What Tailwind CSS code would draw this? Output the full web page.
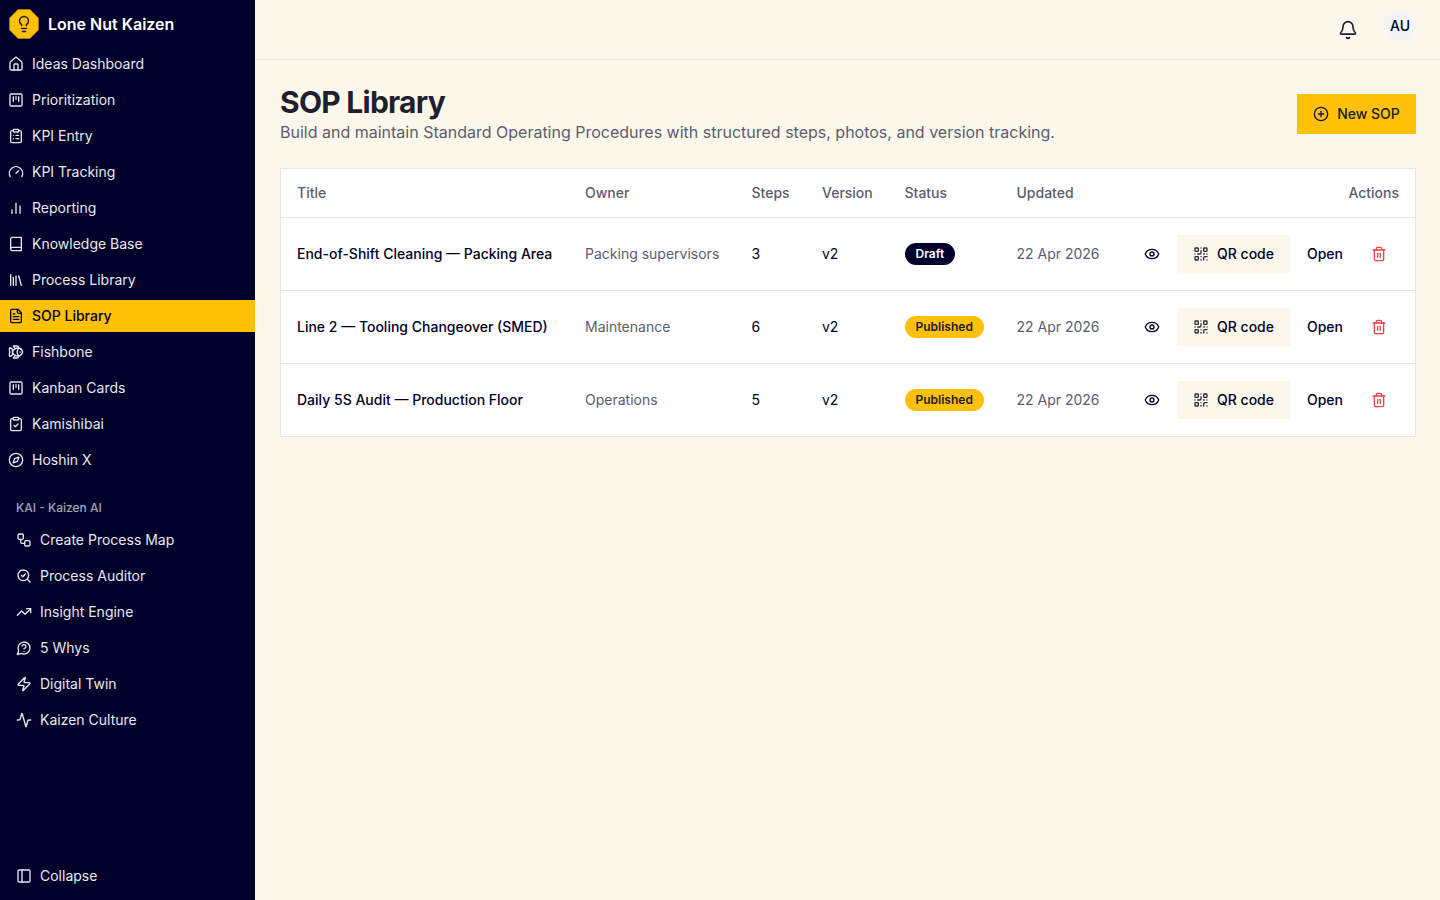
<!DOCTYPE html>
<html lang="en">

<head>
    <meta charset="UTF-8">
    <meta name="viewport" content="width=device-width, initial-scale=1.0">
    <title>SOP Library</title>
    <script src="https://cdn.jsdelivr.net/npm/@tailwindcss/browser@4"></script>
</head>

<body class="bg-[#fcf7eb] text-[#00002a] font-['Inter',sans-serif] h-screen overflow-hidden flex">
    <!-- Sidebar -->
    <aside class="w-[255px] h-screen shrink-0 bg-[#00002a] text-[#e8e8ee] flex flex-col text-sm">
        <div class="h-12 flex items-center gap-[9px] pl-[9px]">
            <svg class="w-[30px] h-[30px]" viewBox="0 0 30 30">
                <polygon points="9,0.5 21,0.5 29.5,9 29.5,21 21,29.5 9,29.5 0.5,21 0.5,9" fill="#ffc107" stroke="#a8702a" stroke-width="0.8"></polygon>
                <g transform="translate(6 6) scale(0.75)" fill="none" stroke="#2a1d20" stroke-width="2" stroke-linecap="round" stroke-linejoin="round">
                    <path d="M15 14c.2-1 .7-1.7 1.5-2.5 1-.9 1.5-2.2 1.5-3.5A6 6 0 0 0 6 8c0 1 .2 2.2 1.5 3.5.7.7 1.3 1.5 1.5 2.5"></path>
                    <path d="M9 18h6"></path>
                    <path d="M10 22h4"></path>
                </g>
            </svg>
            <span class="text-base font-semibold text-white">Lone Nut Kaizen</span>
        </div>

        <nav class="flex flex-col gap-1">
            <a class="h-8 flex items-center gap-2 pl-2">
                <svg class="w-4 h-4" viewBox="0 0 24 24" fill="none" stroke="currentColor" stroke-width="2" stroke-linecap="round" stroke-linejoin="round"><path d="M15 21v-8a1 1 0 0 0-1-1h-4a1 1 0 0 0-1 1v8"></path><path d="M3 10a2 2 0 0 1 .709-1.528l7-5.999a2 2 0 0 1 2.582 0l7 5.999A2 2 0 0 1 21 10v9a2 2 0 0 1-2 2H5a2 2 0 0 1-2-2z"></path></svg>
                <span>Ideas Dashboard</span>
            </a>
            <a class="h-8 flex items-center gap-2 pl-2">
                <svg class="w-4 h-4" viewBox="0 0 24 24" fill="none" stroke="currentColor" stroke-width="2" stroke-linecap="round" stroke-linejoin="round"><rect width="18" height="18" x="3" y="3" rx="2"></rect><path d="M8 7v7"></path><path d="M12 7v4"></path><path d="M16 7v7"></path></svg>
                <span>Prioritization</span>
            </a>
            <a class="h-8 flex items-center gap-2 pl-2">
                <svg class="w-4 h-4" viewBox="0 0 24 24" fill="none" stroke="currentColor" stroke-width="2" stroke-linecap="round" stroke-linejoin="round"><rect width="8" height="4" x="8" y="2" rx="1"></rect><path d="M16 4h2a2 2 0 0 1 2 2v14a2 2 0 0 1-2 2H6a2 2 0 0 1-2-2V6a2 2 0 0 1 2-2h2"></path><path d="M12 11h4"></path><path d="M12 16h4"></path><path d="M8 11h.01"></path><path d="M8 16h.01"></path></svg>
                <span>KPI Entry</span>
            </a>
            <a class="h-8 flex items-center gap-2 pl-2">
                <svg class="w-4 h-4" viewBox="0 0 24 24" fill="none" stroke="currentColor" stroke-width="2" stroke-linecap="round" stroke-linejoin="round"><path d="m12 14 4-4"></path><path d="M3.34 19a10 10 0 1 1 17.32 0"></path></svg>
                <span>KPI Tracking</span>
            </a>
            <a class="h-8 flex items-center gap-2 pl-2">
                <svg class="w-4 h-4" viewBox="0 0 24 24" fill="none" stroke="currentColor" stroke-width="2" stroke-linecap="round" stroke-linejoin="round"><path d="M6 20v-5"></path><path d="M12 20V5"></path><path d="M18 20V9"></path></svg>
                <span>Reporting</span>
            </a>
            <a class="h-8 flex items-center gap-2 pl-2">
                <svg class="w-4 h-4" viewBox="0 0 24 24" fill="none" stroke="currentColor" stroke-width="2" stroke-linecap="round" stroke-linejoin="round"><path d="M4 19.5v-15A2.5 2.5 0 0 1 6.5 2H20v20H6.5a2.5 2.5 0 0 1 0-5H20"></path></svg>
                <span>Knowledge Base</span>
            </a>
            <a class="h-8 flex items-center gap-2 pl-2">
                <svg class="w-4 h-4" viewBox="0 0 24 24" fill="none" stroke="currentColor" stroke-width="2" stroke-linecap="round" stroke-linejoin="round"><path d="m16 6 4 14"></path><path d="M12 6v14"></path><path d="M8 8v12"></path><path d="M4 4v16"></path></svg>
                <span>Process Library</span>
            </a>
            <a class="h-8 flex items-center gap-2 pl-2 bg-[#ffc107] text-[#00002a] font-medium">
                <svg class="w-4 h-4" viewBox="0 0 24 24" fill="none" stroke="currentColor" stroke-width="2" stroke-linecap="round" stroke-linejoin="round"><path d="M15 2H6a2 2 0 0 0-2 2v16a2 2 0 0 0 2 2h12a2 2 0 0 0 2-2V7Z"></path><path d="M14 2v4a2 2 0 0 0 2 2h4"></path><path d="M10 9H8"></path><path d="M16 13H8"></path><path d="M16 17H8"></path></svg>
                <span>SOP Library</span>
            </a>
            <a class="h-8 flex items-center gap-2 pl-2">
                <svg class="w-4 h-4" viewBox="0 0 24 24" fill="none" stroke="currentColor" stroke-width="2" stroke-linecap="round" stroke-linejoin="round"><path d="M6.5 12c.94-3.46 4.94-6 8.5-6 3.56 0 6.06 2.54 7 6-.94 3.47-3.44 6-7 6s-7.56-2.53-8.5-6Z"></path><path d="M18 12v.5"></path><path d="M16 17.93a9.77 9.77 0 0 1 0-11.86"></path><path d="M7 10.67C7 8 5.58 5.97 2.73 5.5c-1 1.5-1 5 .23 6.5-1.24 1.5-1.24 5-.23 6.5C5.58 18.03 7 16 7 13.33"></path><path d="M10.46 7.26C10.2 5.88 9.17 4.24 8 3h5.8a2 2 0 0 1 1.98 1.67l.23 1.4"></path><path d="m16.01 17.93-.23 1.4A2 2 0 0 1 13.8 21H8c1.18-1.24 2.2-2.88 2.46-4.26"></path></svg>
                <span>Fishbone</span>
            </a>
            <a class="h-8 flex items-center gap-2 pl-2">
                <svg class="w-4 h-4" viewBox="0 0 24 24" fill="none" stroke="currentColor" stroke-width="2" stroke-linecap="round" stroke-linejoin="round"><rect width="18" height="18" x="3" y="3" rx="2"></rect><path d="M8 7v7"></path><path d="M12 7v4"></path><path d="M16 7v7"></path></svg>
                <span>Kanban Cards</span>
            </a>
            <a class="h-8 flex items-center gap-2 pl-2">
                <svg class="w-4 h-4" viewBox="0 0 24 24" fill="none" stroke="currentColor" stroke-width="2" stroke-linecap="round" stroke-linejoin="round"><rect width="8" height="4" x="8" y="2" rx="1"></rect><path d="M16 4h2a2 2 0 0 1 2 2v14a2 2 0 0 1-2 2H6a2 2 0 0 1-2-2V6a2 2 0 0 1 2-2h2"></path><path d="m9 14 2 2 4-4"></path></svg>
                <span>Kamishibai</span>
            </a>
            <a class="h-8 flex items-center gap-2 pl-2">
                <svg class="w-4 h-4" viewBox="0 0 24 24" fill="none" stroke="currentColor" stroke-width="2" stroke-linecap="round" stroke-linejoin="round"><circle cx="12" cy="12" r="10"></circle><path d="m16.24 7.76-2.12 6.36-6.36 2.12 2.12-6.36z"></path></svg>
                <span>Hoshin X</span>
            </a>
        </nav>

        <p class="mt-[24px] mb-[8px] pl-4 h-[16px] leading-[16px] text-xs font-medium text-[#a3a3b5]">KAI - Kaizen AI</p>

        <nav class="flex flex-col gap-1">
            <a class="h-8 flex items-center gap-2 pl-4">
                <svg class="w-4 h-4" viewBox="0 0 24 24" fill="none" stroke="currentColor" stroke-width="2" stroke-linecap="round" stroke-linejoin="round"><rect width="8" height="8" x="3" y="3" rx="2"></rect><path d="M7 11v4a2 2 0 0 0 2 2h4"></path><rect width="8" height="8" x="13" y="13" rx="2"></rect></svg>
                <span>Create Process Map</span>
            </a>
            <a class="h-8 flex items-center gap-2 pl-4">
                <svg class="w-4 h-4" viewBox="0 0 24 24" fill="none" stroke="currentColor" stroke-width="2" stroke-linecap="round" stroke-linejoin="round"><path d="m8 11 2 2 4-4"></path><circle cx="11" cy="11" r="8"></circle><path d="m21 21-4.3-4.3"></path></svg>
                <span>Process Auditor</span>
            </a>
            <a class="h-8 flex items-center gap-2 pl-4">
                <svg class="w-4 h-4" viewBox="0 0 24 24" fill="none" stroke="currentColor" stroke-width="2" stroke-linecap="round" stroke-linejoin="round"><path d="M22 7 13.5 15.5 8.5 10.5 2 17"></path><path d="M16 7h6v6"></path></svg>
                <span>Insight Engine</span>
            </a>
            <a class="h-8 flex items-center gap-2 pl-4">
                <svg class="w-4 h-4" viewBox="0 0 24 24" fill="none" stroke="currentColor" stroke-width="2" stroke-linecap="round" stroke-linejoin="round"><path d="M7.9 20A9 9 0 1 0 4 16.1L2 22Z"></path><path d="M9.09 9a3 3 0 0 1 5.83 1c0 2-3 3-3 3"></path><path d="M12 17h.01"></path></svg>
                <span>5 Whys</span>
            </a>
            <a class="h-8 flex items-center gap-2 pl-4">
                <svg class="w-4 h-4" viewBox="0 0 24 24" fill="none" stroke="currentColor" stroke-width="2" stroke-linecap="round" stroke-linejoin="round"><path d="M4 14a1 1 0 0 1-.78-1.63l9.9-10.2a.5.5 0 0 1 .86.46l-1.92 6.02A1 1 0 0 0 13 10h7a1 1 0 0 1 .78 1.63l-9.9 10.2a.5.5 0 0 1-.86-.46l1.92-6.02A1 1 0 0 0 11 14z"></path></svg>
                <span>Digital Twin</span>
            </a>
            <a class="h-8 flex items-center gap-2 pl-4">
                <svg class="w-4 h-4" viewBox="0 0 24 24" fill="none" stroke="currentColor" stroke-width="2" stroke-linecap="round" stroke-linejoin="round"><path d="M22 12h-2.48a2 2 0 0 0-1.93 1.46l-2.35 8.36a.25.25 0 0 1-.48 0L9.24 2.18a.25.25 0 0 0-.48 0l-2.35 8.36A2 2 0 0 1 4.49 12H2"></path></svg>
                <span>Kaizen Culture</span>
            </a>
        </nav>

        <a class="mt-auto mb-2 h-8 flex items-center gap-2 pl-4">
            <svg class="w-4 h-4" viewBox="0 0 24 24" fill="none" stroke="currentColor" stroke-width="2" stroke-linecap="round" stroke-linejoin="round"><rect width="18" height="18" x="3" y="3" rx="2"></rect><path d="M9 3v18"></path></svg>
            <span>Collapse</span>
        </a>
    </aside>

    <!-- Main -->
    <div class="flex-1 flex flex-col min-w-0">
        <header class="h-[60px] border-b border-[#e7e6e2] flex justify-end items-start gap-[26px] pr-6 pt-[10px]">
            <button class="mt-[10px]">
                <svg class="w-5 h-5 text-[#1f1f33]" viewBox="0 0 24 24" fill="none" stroke="currentColor" stroke-width="2" stroke-linecap="round" stroke-linejoin="round"><path d="M10.268 21a2 2 0 0 0 3.464 0"></path><path d="M3.262 15.326A1 1 0 0 0 4 17h16a1 1 0 0 0 .74-1.673C19.41 13.956 18 12.499 18 8A6 6 0 0 0 6 8c0 4.499-1.411 5.956-2.738 7.326"></path></svg>
            </button>
            <div class="w-8 h-8 rounded-full bg-[#f5f5f5] flex items-center justify-center text-sm font-medium">AU</div>
        </header>

        <main class="px-6 pt-6">
            <div class="flex justify-between items-start h-[84px] pr-0 pt-[10px]">
                <div class="-mt-[10px] pl-px">
                    <h1 class="text-3xl font-bold tracking-tight text-[#1f1f2e] leading-9">SOP Library</h1>
                    <p class="text-base leading-6 text-[#5c5c70]">Build and maintain Standard Operating Procedures with structured steps, photos, and version tracking.</p>
                </div>
                <button class="h-10 w-[119px] bg-[#ffc107] text-[#1a1a2e] text-sm font-medium flex items-center justify-center gap-2">
                    <svg class="w-4 h-4" viewBox="0 0 24 24" fill="none" stroke="currentColor" stroke-width="2" stroke-linecap="round" stroke-linejoin="round"><circle cx="12" cy="12" r="10"></circle><path d="M8 12h8"></path><path d="M12 8v8"></path></svg>
                    New SOP
                </button>
            </div>

            <div class="bg-white border border-[#e7e6e2] ml-px">
                <table class="w-full table-fixed text-sm text-left">
                    <thead>
                        <tr class="h-12 border-b border-[#e7e6e2] text-[#5c5c70]">
                            <th class="w-[288px] pl-4 font-medium">Title</th>
                            <th class="w-[166.5px] pl-4 font-medium">Owner</th>
                            <th class="w-[70.5px] pl-4 font-medium">Steps</th>
                            <th class="w-[82.5px] pl-4 font-medium">Version</th>
                            <th class="w-[112px] pl-4 font-medium">Status</th>
                            <th class="w-[120px] pl-4 font-medium">Updated</th>
                            <th class="pr-4 font-medium text-right">Actions</th>
                        </tr>
                    </thead>
                    <tbody>
                        <tr class="h-[73px] border-b border-[#e7e6e2]">
                            <td class="pl-4 font-medium whitespace-nowrap">End-of-Shift Cleaning — Packing Area</td>
                            <td class="pl-4 text-[#5c5c70]">Packing supervisors</td>
                            <td class="pl-4">3</td>
                            <td class="pl-4">v2</td>
                            <td class="pl-4"><span class="inline-flex h-[22px] items-center rounded-full px-[11px] text-xs font-semibold bg-[#00002a] text-white">Draft</span></td>
                            <td class="pl-4 text-[#5c5c70]">22 Apr 2026</td>
                            <td class="pr-4">
                                <div class="flex items-center justify-end">
                                    <button class="w-9 h-9 flex items-center justify-center mr-[7px]"><svg class="w-4 h-4" viewBox="0 0 24 24" fill="none" stroke="currentColor" stroke-width="2" stroke-linecap="round" stroke-linejoin="round"><path d="M2.062 12.348a1 1 0 0 1 0-.696 10.75 10.75 0 0 1 19.876 0 1 1 0 0 1 0 .696 10.75 10.75 0 0 1-19.876 0"></path><circle cx="12" cy="12" r="3"></circle></svg></button>
                                    <button class="h-[38px] w-[113px] bg-[#fcf7eb] font-medium flex items-center justify-center gap-2"><svg class="w-4 h-4 text-[#2a2a3c]" viewBox="0 0 24 24" fill="none" stroke="currentColor" stroke-width="2" stroke-linecap="round" stroke-linejoin="round"><rect width="5" height="5" x="3" y="3" rx="1"></rect><rect width="5" height="5" x="16" y="3" rx="1"></rect><rect width="5" height="5" x="3" y="16" rx="1"></rect><path d="M21 16h-3a2 2 0 0 0-2 2v3"></path><path d="M21 21v.01"></path><path d="M12 7v3a2 2 0 0 1-2 2H7"></path><path d="M3 12h.01"></path><path d="M12 3h.01"></path><path d="M12 16v.01"></path><path d="M16 12h1"></path><path d="M21 12v.01"></path><path d="M12 21v-1"></path></svg>QR code</button>
                                    <button class="w-[70px] h-[38px] font-medium">Open</button>
                                    <button class="w-[39px] h-[38px] pr-px flex items-center justify-center text-[#ef4444]"><svg class="w-4 h-4" viewBox="0 0 24 24" fill="none" stroke="currentColor" stroke-width="2" stroke-linecap="round" stroke-linejoin="round"><path d="M3 6h18"></path><path d="M19 6v14c0 1-1 2-2 2H7c-1 0-2-1-2-2V6"></path><path d="M8 6V4c0-1 1-2 2-2h4c1 0 2 1 2 2v2"></path><line x1="10" x2="10" y1="11" y2="17"></line><line x1="14" x2="14" y1="11" y2="17"></line></svg></button>
                                </div>
                            </td>
                        </tr>
                        <tr class="h-[73px] border-b border-[#e7e6e2]">
                            <td class="pl-4 font-medium whitespace-nowrap">Line 2 — Tooling Changeover (SMED)</td>
                            <td class="pl-4 text-[#5c5c70]">Maintenance</td>
                            <td class="pl-4">6</td>
                            <td class="pl-4">v2</td>
                            <td class="pl-4"><span class="inline-flex h-[22px] items-center rounded-full px-[11px] text-xs font-semibold bg-[#ffc107] text-[#1a1a2e]">Published</span></td>
                            <td class="pl-4 text-[#5c5c70]">22 Apr 2026</td>
                            <td class="pr-4">
                                <div class="flex items-center justify-end">
                                    <button class="w-9 h-9 flex items-center justify-center mr-[7px]"><svg class="w-4 h-4" viewBox="0 0 24 24" fill="none" stroke="currentColor" stroke-width="2" stroke-linecap="round" stroke-linejoin="round"><path d="M2.062 12.348a1 1 0 0 1 0-.696 10.75 10.75 0 0 1 19.876 0 1 1 0 0 1 0 .696 10.75 10.75 0 0 1-19.876 0"></path><circle cx="12" cy="12" r="3"></circle></svg></button>
                                    <button class="h-[38px] w-[113px] bg-[#fcf7eb] font-medium flex items-center justify-center gap-2"><svg class="w-4 h-4 text-[#2a2a3c]" viewBox="0 0 24 24" fill="none" stroke="currentColor" stroke-width="2" stroke-linecap="round" stroke-linejoin="round"><rect width="5" height="5" x="3" y="3" rx="1"></rect><rect width="5" height="5" x="16" y="3" rx="1"></rect><rect width="5" height="5" x="3" y="16" rx="1"></rect><path d="M21 16h-3a2 2 0 0 0-2 2v3"></path><path d="M21 21v.01"></path><path d="M12 7v3a2 2 0 0 1-2 2H7"></path><path d="M3 12h.01"></path><path d="M12 3h.01"></path><path d="M12 16v.01"></path><path d="M16 12h1"></path><path d="M21 12v.01"></path><path d="M12 21v-1"></path></svg>QR code</button>
                                    <button class="w-[70px] h-[38px] font-medium">Open</button>
                                    <button class="w-[39px] h-[38px] pr-px flex items-center justify-center text-[#ef4444]"><svg class="w-4 h-4" viewBox="0 0 24 24" fill="none" stroke="currentColor" stroke-width="2" stroke-linecap="round" stroke-linejoin="round"><path d="M3 6h18"></path><path d="M19 6v14c0 1-1 2-2 2H7c-1 0-2-1-2-2V6"></path><path d="M8 6V4c0-1 1-2 2-2h4c1 0 2 1 2 2v2"></path><line x1="10" x2="10" y1="11" y2="17"></line><line x1="14" x2="14" y1="11" y2="17"></line></svg></button>
                                </div>
                            </td>
                        </tr>
                        <tr class="h-[73px]">
                            <td class="pl-4 font-medium whitespace-nowrap">Daily 5S Audit — Production Floor</td>
                            <td class="pl-4 text-[#5c5c70]">Operations</td>
                            <td class="pl-4">5</td>
                            <td class="pl-4">v2</td>
                            <td class="pl-4"><span class="inline-flex h-[22px] items-center rounded-full px-[11px] text-xs font-semibold bg-[#ffc107] text-[#1a1a2e]">Published</span></td>
                            <td class="pl-4 text-[#5c5c70]">22 Apr 2026</td>
                            <td class="pr-4">
                                <div class="flex items-center justify-end">
                                    <button class="w-9 h-9 flex items-center justify-center mr-[7px]"><svg class="w-4 h-4" viewBox="0 0 24 24" fill="none" stroke="currentColor" stroke-width="2" stroke-linecap="round" stroke-linejoin="round"><path d="M2.062 12.348a1 1 0 0 1 0-.696 10.75 10.75 0 0 1 19.876 0 1 1 0 0 1 0 .696 10.75 10.75 0 0 1-19.876 0"></path><circle cx="12" cy="12" r="3"></circle></svg></button>
                                    <button class="h-[38px] w-[113px] bg-[#fcf7eb] font-medium flex items-center justify-center gap-2"><svg class="w-4 h-4 text-[#2a2a3c]" viewBox="0 0 24 24" fill="none" stroke="currentColor" stroke-width="2" stroke-linecap="round" stroke-linejoin="round"><rect width="5" height="5" x="3" y="3" rx="1"></rect><rect width="5" height="5" x="16" y="3" rx="1"></rect><rect width="5" height="5" x="3" y="16" rx="1"></rect><path d="M21 16h-3a2 2 0 0 0-2 2v3"></path><path d="M21 21v.01"></path><path d="M12 7v3a2 2 0 0 1-2 2H7"></path><path d="M3 12h.01"></path><path d="M12 3h.01"></path><path d="M12 16v.01"></path><path d="M16 12h1"></path><path d="M21 12v.01"></path><path d="M12 21v-1"></path></svg>QR code</button>
                                    <button class="w-[70px] h-[38px] font-medium">Open</button>
                                    <button class="w-[39px] h-[38px] pr-px flex items-center justify-center text-[#ef4444]"><svg class="w-4 h-4" viewBox="0 0 24 24" fill="none" stroke="currentColor" stroke-width="2" stroke-linecap="round" stroke-linejoin="round"><path d="M3 6h18"></path><path d="M19 6v14c0 1-1 2-2 2H7c-1 0-2-1-2-2V6"></path><path d="M8 6V4c0-1 1-2 2-2h4c1 0 2 1 2 2v2"></path><line x1="10" x2="10" y1="11" y2="17"></line><line x1="14" x2="14" y1="11" y2="17"></line></svg></button>
                                </div>
                            </td>
                        </tr>
                    </tbody>
                </table>
            </div>
        </main>
    </div>
</body>

</html>
